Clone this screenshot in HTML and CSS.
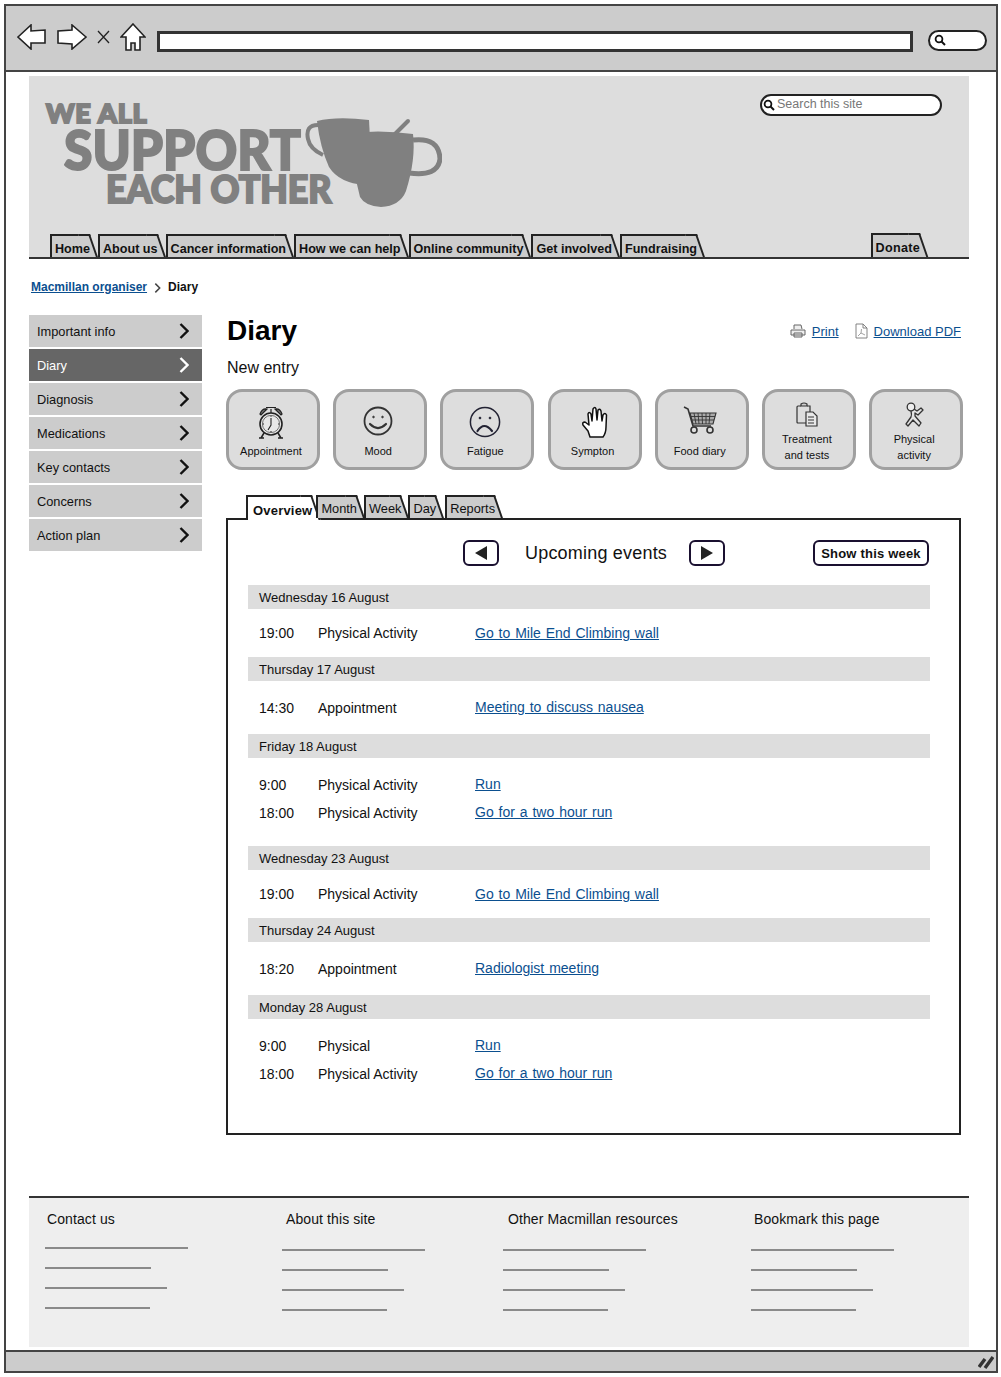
FILE: index.html
```html
<!DOCTYPE html>
<html lang="en">
<head>
  <meta charset="UTF-8">
  <meta name="viewport" content="width=device-width, initial-scale=1.0">
  <title>Diary - Macmillan organiser</title>
  <link rel="stylesheet" href="styles.css">
</head>
<body>
  <svg class="defs" width="0" height="0">
    <symbol id="chev" viewBox="0 0 10 16"><path d="M1.5 1 L8.5 8 L1.5 15" fill="none" stroke="currentColor" stroke-width="2.4"/></symbol>
    <symbol id="lens" viewBox="0 0 12 12"><circle cx="5" cy="5" r="3.4" fill="none" stroke="#111" stroke-width="1.8"/><path d="M7.5 7.5 L11 11" stroke="#111" stroke-width="2"/></symbol>
  </svg>

  <div class="window">
    <div class="toolbar">
      <svg class="tool-icon" width="30" height="26" viewBox="0 0 30 26"><path d="M1 13 L14 1 L14 7 L28 6 L28 19 L14 19 L14 25 Z" fill="#fff" stroke="#222" stroke-width="1.6"/></svg>
      <svg class="tool-icon" width="30" height="26" viewBox="0 0 30 26"><path d="M29 13 L15 1 L15 6 L1 7 L1 19 L15 20 L15 25 Z" fill="#fff" stroke="#222" stroke-width="1.6"/></svg>
      <svg class="tool-icon" width="13" height="14" viewBox="0 0 13 14"><path d="M1 1 L12 13 M12 1 L1 13" stroke="#222" stroke-width="1.3"/></svg>
      <svg class="tool-icon" width="26" height="28" viewBox="0 0 26 28"><path d="M13 1 L25 14 L20 14 L20 27 L15 27 L15 20 L11 20 L11 27 L6 27 L6 14 L1 14 Z" fill="#fff" stroke="#222" stroke-width="1.6"/></svg>
      <div class="address"></div>
      <div class="tool-search"><svg class="lens" width="12" height="12"><use href="#lens"/></svg></div>
    </div>

    <div class="content">
      <header class="site-head">
        <div class="head-top">
          <div class="logo">
            <div class="logo-words">
              <div class="logo-we">WE ALL</div>
              <div class="logo-support">SUPPORT</div>
              <div class="logo-each">EACH OTHER</div>
            </div>
            <svg class="cups" width="137" height="91" viewBox="0 0 137 91">
              <path d="M12 4 Q32 -1 64 3 L65 22 L60 68 Q34 66 24 50 Q15 30 12 4 Z" fill="#808080"/>
              <path d="M13 8 Q0 8 3 22 Q5 32 18 38" fill="none" stroke="#808080" stroke-width="4"/>
              <path d="M40 17 Q72 12 108 17 Q111 42 101 74 Q95 89 76 90 Q60 89 55 80 Q48 50 40 17 Z" fill="#808080"/>
              <path d="M108 23 Q134 20 135 42 Q133 60 104 56" fill="none" stroke="#808080" stroke-width="5"/>
              <path d="M90 17 L103 4" stroke="#808080" stroke-width="4" stroke-linecap="round"/>
            </svg>
          </div>
          <div class="site-search">
            <svg class="lens" width="12" height="12"><use href="#lens"/></svg>
            <span>Search this site</span>
          </div>
        </div>
        <nav class="nav-tabs">
          <a class="tab tab-bold">Home</a>
          <a class="tab tab-bold">About us</a>
          <a class="tab tab-bold">Cancer information</a>
          <a class="tab tab-bold">How we can help</a>
          <a class="tab tab-bold">Online community</a>
          <a class="tab tab-bold">Get involved</a>
          <a class="tab tab-bold">Fundraising</a>
          <a class="tab tab-bold tab-donate">Donate</a>
        </nav>
      </header>

      <div class="crumbs">
        <a class="crumb-link" href="#">Macmillan organiser</a>
        <svg class="crumb-sep" width="7" height="10"><use href="#chev"/></svg>
        <span>Diary</span>
      </div>

      <div class="layout">
        <ul class="side-menu">
          <li>Important info <svg class="chev" width="10" height="16"><use href="#chev"/></svg></li>
          <li class="active">Diary <svg class="chev" width="10" height="16"><use href="#chev"/></svg></li>
          <li>Diagnosis <svg class="chev" width="10" height="16"><use href="#chev"/></svg></li>
          <li>Medications <svg class="chev" width="10" height="16"><use href="#chev"/></svg></li>
          <li>Key contacts <svg class="chev" width="10" height="16"><use href="#chev"/></svg></li>
          <li>Concerns <svg class="chev" width="10" height="16"><use href="#chev"/></svg></li>
          <li>Action plan <svg class="chev" width="10" height="16"><use href="#chev"/></svg></li>
        </ul>

        <main class="main">
          <div class="title-row">
            <h1>Diary</h1>
            <div class="doc-links">
              <svg width="16" height="14" viewBox="0 0 16 14"><path d="M4 5 L4 1 L11 1 L12 5 M1 6 H15 V11 H1 Z M4 9 H12 V13 H4 Z" fill="#eee" stroke="#666" stroke-width="1"/></svg>
              <a href="#">Print</a>
              <svg class="pdf" width="13" height="16" viewBox="0 0 13 16"><path d="M1 1 H8 L12 5 V15 H1 Z M8 1 V5 H12" fill="#fff" stroke="#777" stroke-width=".9"/><path d="M6.5 6 L6 10 L3 13 M6 10 L10 12" fill="none" stroke="#999" stroke-width=".9"/></svg>
              <a href="#">Download PDF</a>
            </div>
          </div>
          <p class="subtitle">New entry</p>

          <div class="entries">
            <div class="entry">
              <div class="entry-icon">
                <svg width="28" height="33" viewBox="0 0 28 33" fill="none" stroke="#222">
                  <circle cx="14" cy="18" r="11" fill="#e8e8e8" stroke-width="1.6"/>
                  <circle cx="14" cy="18" r="8.6" stroke-width=".6"/>
                  <path d="M3 8 Q5 2 10 3 L4 9 Z M25 8 Q23 2 18 3 L24 9 Z" fill="#777" stroke-width="1.2"/>
                  <path d="M14 7 V3 M9 1.5 H19" stroke-width="1.2"/>
                  <path d="M14 12 V19 L11 24 M14 10 V10.8 M14 25 V26 M6 18 H7 M21 18 H22" stroke-width="1.1"/>
                  <path d="M7 27 L4 32 M21 27 L24 32 M2 32 H7 M21 32 H26" stroke-width="1.5"/>
                </svg>
              </div>
              <span>Appointment</span>
            </div>
            <div class="entry">
              <div class="entry-icon">
                <svg width="30" height="30" viewBox="0 0 30 30" fill="none" stroke="#333">
                  <circle cx="15" cy="15" r="13.5" stroke-width="1.8"/>
                  <path d="M7 18 Q15 26 23 18" stroke-width="2.2" stroke-linecap="round"/>
                  <circle cx="10.5" cy="11" r=".8" fill="#333"/><circle cx="19.5" cy="11" r=".8" fill="#333"/>
                </svg>
              </div>
              <span>Mood</span>
            </div>
            <div class="entry">
              <div class="entry-icon">
                <svg width="32" height="32" viewBox="0 0 32 32" fill="none" stroke="#223">
                  <circle cx="16" cy="16" r="14.6" stroke-width="1.5"/>
                  <path d="M8.5 25 Q15 15 23 25" stroke-width="2.2" stroke-linecap="round"/>
                  <circle cx="11" cy="12" r=".9" fill="#223"/><circle cx="21" cy="12" r=".9" fill="#223"/>
                </svg>
              </div>
              <span>Fatigue</span>
            </div>
            <div class="entry">
              <div class="entry-icon entry-icon-hand">
                <svg width="26" height="32" viewBox="0 0 26 32"><path d="M8 31 L6 25 L1 19 Q0 16 3 16 L7 19 L6 8 Q7 5 9 8 L10 15 L11 3 Q13 0 14 3 L15 14 L16 4 Q18 2 19 5 L20 15 L21 9 Q23 6 24.500 9 L24 21 Q24 27 21 31 Z" fill="#fff" stroke="#111" stroke-width="1.5" stroke-linejoin="round"/></svg>
              </div>
              <span>Sympton</span>
            </div>
            <div class="entry">
              <div class="entry-icon">
                <svg width="34" height="28" viewBox="0 0 34 28" fill="none" stroke="#333">
                  <path d="M1 1 L5 3 L10 20 H28" stroke-width="1.6"/>
                  <path d="M7 7 L33 7 L30 18 H10 Z" fill="#aaa" stroke-width="1.1"/>
                  <path d="M11 7 L13 18 M15 7 L16 18 M19 7 L19.500 18 M23 7 L23 18 M27 7 L26 18 M8 10.500 H32 M9 14 H31" stroke-width=".9"/>
                  <circle cx="11" cy="24" r="3" stroke-width="1.6"/><circle cx="27" cy="24" r="3" stroke-width="1.6"/>
                </svg>
              </div>
              <span>Food diary</span>
            </div>
            <div class="entry entry-two">
              <div class="entry-icon">
                <svg width="22" height="25" viewBox="0 0 22 25" fill="none" stroke="#333" stroke-width="1.2">
                  <path d="M11 4 H14 V10 M11 21 H2 Q1 21 1 20 V5 Q1 4 2 4 H5"/>
                  <path d="M5 4 V2 Q8 0 11 2 V4 Z" fill="#ccc"/>
                  <path d="M10 10 H17 L21 14 V24 H10 Z" fill="#e8e8e8"/>
                  <path d="M12 15 H18 M12 18 H18 M12 21 H18"/>
                </svg>
              </div>
              <span>Treatment<br>and tests</span>
            </div>
            <div class="entry entry-two">
              <div class="entry-icon">
                <svg width="22" height="26" viewBox="0 0 22 26" fill="none" stroke-linecap="round" stroke-linejoin="round">
                  <path d="M8 9 Q9 13 8 15 L3 22 L5 24 L10 18 L16 24 L18 21 L12 14 L12 11 L15 13 L20 8 L18 6 L14 9 L11 7" fill="#e4e4e4" stroke="#333" stroke-width="1.3"/>
                  <circle cx="8" cy="5" r="3.8" fill="#eee" stroke="#333" stroke-width="1.3"/>
                </svg>
              </div>
              <span>Physical<br>activity</span>
            </div>
          </div>

          <div class="view-tabs">
            <a class="tab tab-current">Overview</a>
            <a class="tab">Month</a>
            <a class="tab">Week</a>
            <a class="tab tab-day">Day</a>
            <a class="tab">Reports</a>
          </div>

          <section class="panel">
            <div class="panel-head">
              <button class="arrow-btn"><svg width="12" height="14" viewBox="0 0 12 14"><path d="M12 0 V14 L0 7 Z" fill="#222"/></svg></button>
              <h2>Upcoming events</h2>
              <button class="arrow-btn"><svg width="12" height="14" viewBox="0 0 12 14"><path d="M0 0 V14 L12 7 Z" fill="#222"/></svg></button>
              <button class="week-btn">Show this week</button>
            </div>

            <div class="day">
              <h3>Wednesday 16 August</h3>
              <div class="rows">
                <div class="event"><span>19:00</span><span>Physical Activity</span><a href="#">Go to Mile End Climbing wall</a></div>
              </div>
            </div>
            <div class="day">
              <h3>Thursday 17 August</h3>
              <div class="rows rows-roomy">
                <div class="event"><span>14:30</span><span>Appointment</span><a class="raised" href="#">Meeting to discuss nausea</a></div>
              </div>
            </div>
            <div class="day">
              <h3>Friday 18 August</h3>
              <div class="rows rows-double">
                <div class="event"><span>9:00</span><span>Physical Activity</span><a class="raised" href="#">Run</a></div>
                <div class="event"><span>18:00</span><span>Physical Activity</span><a class="raised" href="#">Go for a two hour run</a></div>
              </div>
            </div>
            <div class="day">
              <h3>Wednesday 23 August</h3>
              <div class="rows">
                <div class="event"><span>19:00</span><span>Physical Activity</span><a href="#">Go to Mile End Climbing wall</a></div>
              </div>
            </div>
            <div class="day">
              <h3>Thursday 24 August</h3>
              <div class="rows rows-roomy">
                <div class="event"><span>18:20</span><span>Appointment</span><a class="raised" href="#">Radiologist meeting</a></div>
              </div>
            </div>
            <div class="day">
              <h3>Monday 28 August</h3>
              <div class="rows rows-double">
                <div class="event"><span>9:00</span><span>Physical</span><a class="raised" href="#">Run</a></div>
                <div class="event"><span>18:00</span><span>Physical Activity</span><a class="raised" href="#">Go for a two hour run</a></div>
              </div>
            </div>
          </section>
        </main>
      </div>

      <footer class="site-foot">
        <div class="foot-col foot-first">
          <h4>Contact us</h4>
          <ul><li class="w-143"></li><li class="w-106"></li><li class="w-122"></li><li class="w-105"></li></ul>
        </div>
        <div class="foot-col foot-second">
          <h4>About this site</h4>
          <ul><li class="w-143"></li><li class="w-106"></li><li class="w-122"></li><li class="w-105"></li></ul>
        </div>
        <div class="foot-col foot-third">
          <h4>Other Macmillan resources</h4>
          <ul><li class="w-143"></li><li class="w-106"></li><li class="w-122"></li><li class="w-105"></li></ul>
        </div>
        <div class="foot-col">
          <h4>Bookmark this page</h4>
          <ul><li class="w-143"></li><li class="w-106"></li><li class="w-122"></li><li class="w-105"></li></ul>
        </div>
      </footer>
    </div>

    <div class="status-bar">
      <svg width="16" height="14" viewBox="0 0 16 14"><path d="M1 12 L7 4 M7 13 L15 2" stroke="#333" stroke-width="3.4"/></svg>
    </div>
  </div>
</body>
</html>
```

FILE: styles.css
```css
* {
  box-sizing: border-box;
}

body {
  margin: 0;
  padding: 4px 3px 4px 4px;
  font-family: "Liberation Sans", Arial, sans-serif;
  font-size: 14px;
  color: #111;
  background-color: #fff;
}

a {
  color: #0b4f8f;
}

ul {
  list-style: none;
  margin: 0;
  padding: 0;
}

.defs {
  display: block;
  height: 0;
}

/* browser chrome */
.toolbar {
  display: flex;
  align-items: center;
  height: 68px;
  padding: 0 9px 2px 11px;
  background-color: #ccc;
  border: 2px solid #444;
}

.tool-icon {
  flex-shrink: 0;
  margin-right: 10px;
}

.address {
  flex: 1;
  height: 21px;
  margin: 8px 15px 0 1px;
  background-color: #fff;
  border: 3px solid #333;
}

.tool-search {
  display: flex;
  align-items: center;
  width: 59px;
  height: 21px;
  margin-top: 6px;
  padding-left: 4px;
  background-color: #fff;
  border: 2px solid #222;
  border-radius: 11px;
}

.lens {
  flex-shrink: 0;
}

.content {
  padding: 4px 27px 3px 23px;
  border-left: 2px solid #444;
  border-right: 2px solid #444;
}

.status-bar {
  display: flex;
  align-items: center;
  justify-content: flex-end;
  height: 23px;
  padding-right: 2px;
  background-color: #ccc;
  border: 2px solid #444;
}

/* site header */
.site-head {
  display: flex;
  flex-direction: column;
  height: 183px;
  background-color: #ddd;
  border-bottom: 2px solid #333;
}

.head-top {
  display: flex;
  justify-content: space-between;
  align-items: flex-start;
  padding: 18px 27px 0 17px;
}

.logo {
  display: flex;
  margin-top: 6px;
}

.logo-words {
  width: 259px;
  font-family: Lato, "Liberation Sans", sans-serif;
  font-weight: 900;
  color: #808080;
  -webkit-text-stroke: 2px #808080;
  white-space: nowrap;
}

.logo-we {
  height: 26px;
  font-size: 27px;
  line-height: 26px;
  letter-spacing: 0.8px;
}

.logo-support {
  height: 46px;
  margin-left: 18px;
  font-size: 56px;
  line-height: 46px;
  transform: scaleX(0.92);
  transform-origin: left;
}

.logo-each {
  height: 33px;
  margin-left: 60px;
  font-size: 38px;
  line-height: 33px;
  transform: scaleX(0.94);
  transform-origin: left;
}

.cups {
  flex-shrink: 0;
  margin-top: 17px;
}

.site-search {
  display: flex;
  align-items: center;
  gap: 2px;
  width: 182px;
  height: 22px;
  padding: 0 0 0 1px;
  font-size: 12.5px;
  color: #777;
  background-color: #fff;
  border: 2px solid #222;
  border-radius: 11px;
}

.site-search span {
  margin-top: -3px;
}

/* sloped tabs, used in the header and above the panel */
.nav-tabs {
  display: flex;
  align-items: flex-end;
  margin-top: auto;
  padding-left: 21px;
}

.view-tabs {
  display: flex;
  align-items: flex-end;
  height: 23px;
  margin: 25px 0 0 20px;
  position: relative;
  z-index: 1;
}

.tab {
  position: relative;
  z-index: 0;
  height: 23px;
  margin-right: 7px;
  padding-left: 3px;
  font-size: 12.8px;
  line-height: 23px;
  color: #111;
  white-space: nowrap;
  background-color: #ccc;
  border-left: 2px solid #222;
  border-top: 2px solid #222;
}

.tab::after {
  content: "";
  position: absolute;
  z-index: -1;
  top: -2px;
  bottom: 0;
  right: 0;
  width: 10px;
  background-color: #ccc;
  border-top: 2px solid #222;
  border-right: 2px solid #222;
  transform: skewX(19deg);
  transform-origin: top;
}

.tab-bold {
  margin-right: 8px;
  font-size: 12.6px;
  font-weight: bold;
  line-height: 26px;
}

.tab-day {
  margin-right: 9px;
}

.tab-donate {
  height: 24px;
  margin-left: auto;
  margin-right: 49px;
  letter-spacing: 0.3px;
}

.tab-current {
  height: 25px;
  margin-bottom: -2px;
  margin-right: 4px;
  padding-left: 5px;
  font-size: 13px;
  font-weight: bold;
  letter-spacing: 0.2px;
  line-height: 27px;
  background-color: #fff;
}

.tab-current::after {
  background-color: #fff;
}

/* breadcrumb */
.crumbs {
  display: flex;
  align-items: center;
  height: 56px;
  padding-left: 2px;
  font-size: 12px;
  font-weight: bold;
}

.crumb-sep {
  margin: 1px 7px 0 7px;
  color: #444;
}

/* layout */
.layout {
  display: flex;
  gap: 24px;
}

.side-menu {
  flex-shrink: 0;
  width: 173px;
}

.side-menu li {
  display: flex;
  align-items: center;
  justify-content: space-between;
  height: 32px;
  margin-bottom: 2px;
  padding: 0 13px 0 8px;
  font-size: 12.8px;
  background-color: #ccc;
}

.side-menu .active {
  color: #fff;
  background-color: #666;
}

.main {
  flex: 1;
  margin-right: 8px;
  min-width: 0;
}

.title-row {
  display: flex;
  align-items: center;
  justify-content: space-between;
  height: 32px;
  padding-left: 1px;
}

h1 {
  margin: 0;
  font-size: 28px;
  line-height: 32px;
  color: #000;
}

.doc-links {
  display: flex;
  align-items: center;
  gap: 6px;
  font-size: 13px;
}

.doc-links .pdf {
  margin-left: 10px;
}

.subtitle {
  margin: 11px 0 0 1px;
  font-size: 16px;
  line-height: 20px;
}

/* new entry buttons */
.entries {
  display: flex;
  gap: 13.2px;
  margin-top: 11px;
}

.entry {
  display: flex;
  flex-direction: column;
  align-items: center;
  flex-shrink: 0;
  width: 94px;
  height: 81px;
  padding: 14px 4px 0 0;
  font-size: 11px;
  line-height: 16px;
  text-align: center;
  background-color: #ddd;
  border: 3px solid #a0a0a0;
  border-radius: 16px;
}

.entry-icon {
  display: flex;
  justify-content: center;
  height: 36px;
  margin-bottom: 1px;
}

.entry-icon-hand {
  margin-left: 4px;
}

.entry-two {
  padding-top: 10px;
}

.entry-two .entry-icon {
  height: 26px;
  margin-bottom: 3px;
}

/* events panel */
.panel {
  height: 617px;
  padding: 20px 29px 0 20px;
  border: 2px solid #222;
}

.panel-head {
  display: flex;
  align-items: center;
  height: 26px;
  margin-bottom: 19px;
  padding-left: 215px;
}

.panel-head h2 {
  margin: 0 22px 0 26px;
  font-size: 18px;
  font-weight: normal;
  letter-spacing: 0.2px;
}

.arrow-btn {
  display: flex;
  align-items: center;
  justify-content: center;
  width: 36px;
  height: 26px;
  padding: 0;
  background-color: #fff;
  border: 2px solid #1a1030;
  border-radius: 6px;
}

.week-btn {
  width: 116px;
  height: 26px;
  margin: 0 1px 0 auto;
  padding: 0;
  font-family: inherit;
  font-size: 13px;
  font-weight: bold;
  letter-spacing: 0.2px;
  color: #111;
  background-color: #fff;
  border: 2px solid #1a1030;
  border-radius: 6px;
}

.day h3 {
  margin: 0;
  height: 24px;
  padding-left: 11px;
  font-size: 13px;
  font-weight: normal;
  line-height: 25px;
  background-color: #ddd;
}

.rows {
  padding: 10px 0;
}

.rows-roomy {
  padding: 13px 0 12px;
}

.rows-double {
  padding: 13px 0 19px;
}

.event {
  display: grid;
  grid-template-columns: 59px 157px 1fr;
  align-items: center;
  height: 28px;
  padding-left: 11px;
}

.event a {
  word-spacing: 1px;
}

.event .raised {
  margin-bottom: 2px;
}

/* footer */
.site-foot {
  display: grid;
  grid-template-columns: 237px 221px 248px 1fr;
  height: 151px;
  margin-top: 61px;
  padding: 12px 0 0 16px;
  background-color: #eee;
  border-top: 2px solid #333;
}

.foot-col h4 {
  margin: 0;
  padding-left: 3px;
  font-size: 14px;
  font-weight: normal;
  letter-spacing: 0.1px;
  line-height: 18px;
}

.foot-first h4 {
  padding-left: 2px;
}

.foot-second h4 {
  padding-left: 4px;
}

.foot-third h4 {
  padding-left: 5px;
}

.foot-col ul {
  margin-top: 3px;
}

.foot-first ul {
  margin-top: 1px;
}

.foot-col li {
  height: 20px;
  border-bottom: 2px solid #8a8a8a;
}

.w-143 {
  width: 143px;
}

.w-106 {
  width: 106px;
}

.w-122 {
  width: 122px;
}

.w-105 {
  width: 105px;
}
```
